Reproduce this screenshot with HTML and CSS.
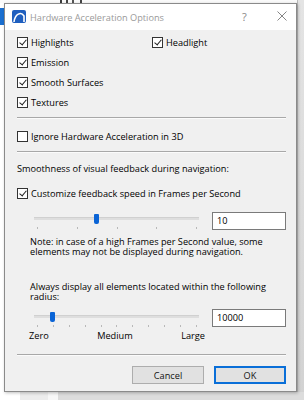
FILE: index.html
```html
<!DOCTYPE html>
<html lang="en">
<head>
    <meta charset="UTF-8">
    <title>Hardware Acceleration Options</title>
    <link rel="stylesheet" href="styles.css">
</head>
<body>
    <div class="desktop">
        <div class="bg-top"></div>
        <div class="bg-blue"></div>
        <div class="bg-right"></div>
        <div class="bg-bottom"></div>

        <div class="dialog">
            <div class="titlebar">
                <svg class="app-icon" width="14" height="13" viewBox="0 0 14 13">
                    <rect x="0" y="0" width="14" height="13" rx="2" fill="#1f5fbf"/>
                    <path d="M2 12 C3 4 9 1 12 6 L12 12" fill="none" stroke="#fff" stroke-width="1.6"/>
                </svg>
                <span class="title">Hardware Acceleration Options</span>
                <span class="help">?</span>
                <svg class="close" width="10" height="10" viewBox="0 0 10 10">
                    <path d="M0.5 0.5 L9.5 9.5 M9.5 0.5 L0.5 9.5" stroke="#777" stroke-width="0.9"/>
                </svg>
            </div>

            <div class="content">
                <div class="checks">
                    <label class="check"><span class="box on"></span>Highlights</label>
                    <label class="check"><span class="box on"></span>Headlight</label>
                    <label class="check"><span class="box on"></span>Emission</label>
                    <span></span>
                    <label class="check"><span class="box on"></span>Smooth Surfaces</label>
                    <span></span>
                    <label class="check"><span class="box on"></span>Textures</label>
                </div>

                <div class="sep sep-a"></div>
                <label class="check single"><span class="box"></span>Ignore Hardware Acceleration in 3D</label>
                <div class="sep sep-b"></div>

                <p class="label smooth">Smoothness of visual feedback during navigation:</p>
                <label class="check single custom"><span class="box on"></span>Customize feedback speed in Frames per Second</label>

                <div class="slider-row first">
                    <div class="slider">
                        <div class="track"></div>
                        <div class="thumb" style="left: 60px"></div>
                        <div class="ticks">
                            <i></i><i></i><i></i><i></i><i></i>
                        </div>
                    </div>
                    <div class="field">10</div>
                </div>

                <p class="note">Note: in case of a high Frames per Second value, some elements may not be displayed during navigation.</p>

                <p class="note always">Always display all elements located within the following radius:</p>

                <div class="slider-row second">
                    <div class="slider">
                        <div class="track"></div>
                        <div class="thumb" style="left: 16px"></div>
                        <div class="ticks">
                            <i></i><i></i><i></i><i></i><i></i><i></i><i></i><i></i><i></i><i></i><i></i>
                        </div>
                        <div class="scale">
                            <span>Zero</span><span>Medium</span><span>Large</span>
                        </div>
                    </div>
                    <div class="field">10000</div>
                </div>

                <div class="sep sep-c"></div>

                <div class="buttons">
                    <button class="btn">Cancel</button>
                    <button class="btn default">OK</button>
                </div>
            </div>
        </div>
    </div>
</body>
</html>
```

FILE: styles.css
```css
body {
    margin: 0;
    font-family: "Open Sans", "Noto Sans", sans-serif;
    font-size: 9.2px;
    color: #000;
    background: #ffffff;
}
.desktop {
    position: relative;
    width: 304px;
    height: 400px;
    overflow: hidden;
}
.bg-top {
    height: 3px;
    background: linear-gradient(90deg, #fafafa 0, #fafafa 60px, #3a3a3a 60px, #3a3a3a 62px, #fafafa 62px, #fafafa 66px, #444 66px, #444 68px, #fafafa 68px, #fafafa 72px, #555 72px, #555 74px, #fafafa 74px, #fafafa 80px, #444 80px, #444 82px, #fafafa 82px);
}
.bg-blue {
    position: absolute;
    left: 0;
    top: 8px;
    width: 4px;
    height: 17px;
    background: #1a6fd0;
}
.bg-right {
    position: absolute;
    left: 297px;
    top: 0;
    width: 7px;
    height: 400px;
    background: linear-gradient(#e4e4e4, #d2d2d2);
    border-left: 1px solid #bbb;
}
.bg-bottom {
    position: absolute;
    left: 0;
    top: 392px;
    width: 304px;
    height: 8px;
    background: linear-gradient(90deg, #fff 0, #fff 20px, #ececec 20px, #ececec 48px, #f7f7f7 48px, #f7f7f7 58px, #dcdcdc 58px);
}

.dialog {
    position: absolute;
    left: 4px;
    top: 3px;
    width: 291px;
    height: 387px;
    border: 1px solid #8a8a8a;
    background: #f0f0f0;
    box-shadow: 1px 1px 3px rgba(0, 0, 0, 0.25);
}
.titlebar {
    height: 26px;
    background: #fff;
    display: flex;
    align-items: center;
    position: relative;
}
.app-icon {
    margin-left: 7px;
    margin-top: -1px;
}
.title {
    margin-left: 4px;
    color: #9a9a9a;
    font-size: 9.2px;
}
.help {
    position: absolute;
    left: 237px;
    top: 5px;
    color: #888;
    font-size: 11px;
}
.close {
    position: absolute;
    left: 272px;
    top: 7px;
}

.content {
    padding: 2px 10px 0 12px;
}
.checks {
    display: grid;
    grid-template-columns: 135px 1fr;
    grid-auto-rows: 20px;
}
.check {
    display: flex;
    align-items: center;
    height: 20px;
    white-space: nowrap;
}
.box {
    width: 9px;
    height: 9px;
    border: 1px solid #333;
    background: #fff;
    margin-right: 3px;
    position: relative;
    flex: none;
}
.box.on::after {
    content: "";
    position: absolute;
    left: 3px;
    top: 0px;
    width: 3px;
    height: 6px;
    border-right: 1px solid #222;
    border-bottom: 1px solid #222;
    transform: rotate(40deg);
}
.sep {
    height: 0;
    border-top: 1px solid #a8a8a8;
    border-bottom: 1px solid #fbfbfb;
}
.sep-a {
    margin-top: 5px;
}
.single {
    margin-top: 7px;
}
.sep-b {
    margin-top: 5px;
}
.label,
.note {
    margin: 0;
    line-height: 10px;
}
.smooth {
    margin-top: 11px;
}
.custom {
    margin-top: 9px;
}

.slider-row {
    display: flex;
    align-items: flex-start;
}
.slider-row.first {
    margin-top: 9px;
}
.slider {
    position: relative;
    margin-left: 17px;
    width: 165px;
    height: 18px;
}
.track {
    position: absolute;
    left: 0;
    right: 0;
    top: 5px;
    height: 2px;
    background: #dedede;
    border-top: 1px solid #d0d0d0;
}
.thumb {
    position: absolute;
    top: 2px;
    width: 5px;
    height: 10px;
    background: #0a64d6;
    border-radius: 1px 1px 2px 2px;
}
.ticks {
    position: absolute;
    left: 3px;
    right: 2px;
    top: 15px;
    display: flex;
    justify-content: space-between;
}
.ticks i {
    width: 1px;
    height: 2px;
    background: #b8b8b8;
}
.field {
    margin-left: 13px;
    width: 68px;
    height: 16px;
    border: 1px solid #7a7a7a;
    background: #fff;
    padding-left: 4px;
    line-height: 16px;
}
.note {
    margin-top: 7px;
    padding-left: 13px;
}
.always {
    margin-top: 25px;
}
.slider-row.second {
    margin-top: 7px;
}
.second .slider {
    height: 28px;
}
.second .track {
    top: 6px;
}
.second .thumb {
    top: 3px;
}
.second .ticks {
    top: 16px;
}
.scale {
    position: absolute;
    left: -5px;
    right: -6px;
    top: 20px;
    display: flex;
    justify-content: space-between;
}
.sep-c {
    margin-top: 17px;
}
.buttons {
    display: flex;
    justify-content: flex-end;
    gap: 10px;
    margin-top: 10px;
}
.btn {
    width: 72px;
    height: 18px;
    font-family: inherit;
    font-size: 9.2px;
    color: #111;
    background: #e1e1e1;
    border: 1px solid #adadad;
    padding: 0;
}
.btn.default {
    border: 2px solid #0a6fd8;
}
```
